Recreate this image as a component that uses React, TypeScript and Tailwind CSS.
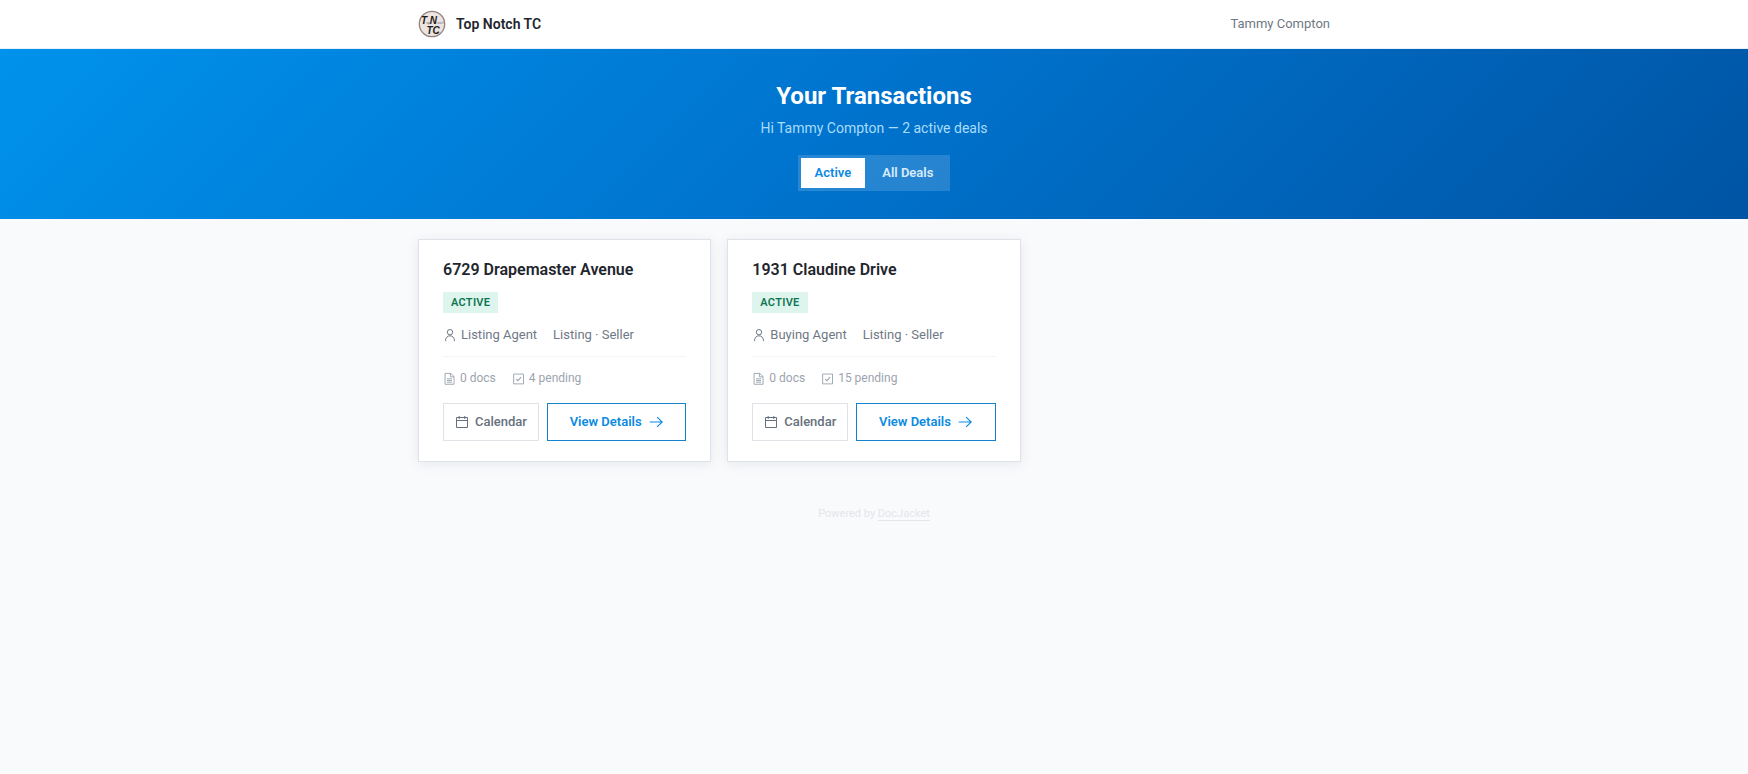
import { ReactNode, useState } from "react";

interface IDeal {
  address: string;
  status: string;
  role: string;
  side: string;
  docs: number;
  pending: number;
}

const deals: IDeal[] = [
  { address: "6729 Drapemaster Avenue", status: "Active", role: "Listing Agent", side: "Listing · Seller", docs: 0, pending: 4 },
  { address: "1931 Claudine Drive", status: "Active", role: "Buying Agent", side: "Listing · Seller", docs: 0, pending: 15 },
];

const Icon = ({ className, children }: { className: string; children: ReactNode }) => (
  <svg
    className={`shrink-0 ${className}`}
    viewBox="0 0 14 14"
    fill="none"
    stroke="currentColor"
    strokeWidth="1"
    aria-hidden="true"
  >
    {children}
  </svg>
);

const UserIcon = () => (
  <Icon className="size-3.5">
    <circle cx="7" cy="4.2" r="2.7" />
    <path d="M2.6 13.2v-1a4.4 4.4 0 0 1 8.8 0v1" />
  </Icon>
);

const DocIcon = () => (
  <Icon className="size-[13px]">
    <path d="M2.2 1.5h6.1l3.6 3.4v8.3H2.2zM8 1.5v3.7h3.9M4.3 7.4h5.4M4.3 9.2h5.4M4.3 11h5.4" />
  </Icon>
);

const CheckIcon = () => (
  <Icon className="size-[13px]">
    <path d="M1.8 2.2h10.6v10.6H1.8z" />
    <path d="M4.5 7.6l1.9 1.8 3.4-3.8" strokeWidth="1.2" />
  </Icon>
);

const CalendarIcon = () => (
  <Icon className="size-3.5">
    <path d="M1.5 2.5h11v10h-11zM1.5 5.5h11M4.2 1v3M9.8 1v3" />
  </Icon>
);

const ArrowIcon = () => (
  <Icon className="size-4">
    <path d="M1.5 7h11M8 2.8l4.4 4.2L8 11.2" />
  </Icon>
);

const Logo = () => (
  <svg className="size-7 shrink-0" viewBox="0 0 28 28" role="img" aria-label="Top Notch TC">
    <circle cx="14" cy="14" r="12.7" fill="#ebe4e0" stroke="#94837e" strokeWidth="1.3" />
    <g fill="#1f1b1b" fontFamily="'Liberation Sans', sans-serif" fontStyle="italic">
      <text x="3" y="14" fontSize="10" fontWeight="700">T</text>
      <text x="8.4" y="14" fontSize="4" fill="#6d6361">op</text>
      <text x="11.8" y="14" fontSize="10" fontWeight="700">N</text>
      <text x="19" y="14" fontSize="4" fill="#8b807d">otch</text>
      <text x="8.5" y="23.6" fontSize="10" fontWeight="700">TC</text>
    </g>
  </svg>
);

const DealCard = ({ deal }: { deal: IDeal }) => (
  <article className="border border-[#dfe2e7] bg-white px-6 py-5 shadow-[0_2px_12px_rgba(15,30,50,0.08)]">
    <h2 className="text-base leading-5 font-semibold text-[#1f262d]">{deal.address}</h2>
    <div className="mt-3 flex">
      <span className="bg-[#def5ee] px-2 text-[11px] leading-[21px] font-semibold tracking-wide text-[#0e7552] uppercase">
        {deal.status}
      </span>
    </div>
    <div className="mt-3 flex gap-4 border-b border-[#f3f4f6] pb-3 text-[13px] leading-[19px] text-[#6f7985]">
      <span className="flex items-center gap-1">
        <UserIcon />
        {deal.role}
      </span>
      <span>{deal.side}</span>
    </div>
    <div className="mt-3 flex gap-4 text-xs leading-[18px] text-[#9ba4af]">
      <span className="flex items-center gap-1">
        <DocIcon />
        {deal.docs} docs
      </span>
      <span className="flex items-center gap-1">
        <CheckIcon />
        {deal.pending} pending
      </span>
    </div>
    <div className="mt-4 flex gap-2 text-[13px] leading-5">
      <button
        type="button"
        className="flex items-center gap-1.5 border border-[#dfe2e7] px-[11px] py-2 font-medium text-[#66717d]"
      >
        <CalendarIcon />
        Calendar
      </button>
      <a
        href="#details"
        className="flex grow items-center justify-center gap-1.5 border border-[#1583cc] py-2 font-semibold text-[#0b8ae3]"
      >
        View Details
        <ArrowIcon />
      </a>
    </div>
  </article>
);

export default function App() {
  const [tab, setTab] = useState("Active");

  return (
    <div className="min-h-screen bg-[#f9fafc] font-['Roboto',sans-serif]">
      <header className="border-b border-[#e8f1f9] bg-white">
        <div className="mx-auto flex h-12 max-w-[960px] items-center justify-between px-6">
          <div className="flex items-center gap-2.5">
            <Logo />
            <span className="text-sm font-semibold text-[#1f262d]">Top Notch TC</span>
          </div>
          <span className="text-[13px] text-[#6f7985]">Tammy Compton</span>
        </div>
      </header>

      <section className="flex flex-col items-center bg-[linear-gradient(135deg,#0092ec_0%,#0072cc_50%,#0054a4_100%)] px-6 py-7 text-center">
        <h1 className="text-2xl leading-[38px] font-bold text-white">Your Transactions</h1>
        <p className="mt-0.5 text-sm leading-[22px] text-[#a9dcfb]">Hi Tammy Compton — 2 active deals</p>
        <div className="mt-4 flex gap-[3px] bg-white/15 p-[3px]">
          {["Active", "All Deals"].map((name) => (
            <button
              key={name}
              type="button"
              aria-pressed={tab === name}
              onClick={() => setTab(name)}
              className={`px-3.5 py-[5px] text-[13px] leading-5 font-semibold ${
                tab === name ? "bg-white text-[#0b8ae3]" : "text-[#d9ecfb]"
              }`}
            >
              {name}
            </button>
          ))}
        </div>
      </section>

      <main className="mx-auto grid max-w-[960px] grid-cols-1 gap-4 px-6 pt-5 sm:grid-cols-2 lg:grid-cols-3">
        {deals.map((deal) => (
          <DealCard key={deal.address} deal={deal} />
        ))}
      </main>

      <footer className="pt-11 pb-6 text-center text-[11px] leading-4 text-[#e3e6ea]">
        Powered by{" "}
        <a href="#docjacket" className="underline underline-offset-3">
          DocJacket
        </a>
      </footer>
    </div>
  );
}
